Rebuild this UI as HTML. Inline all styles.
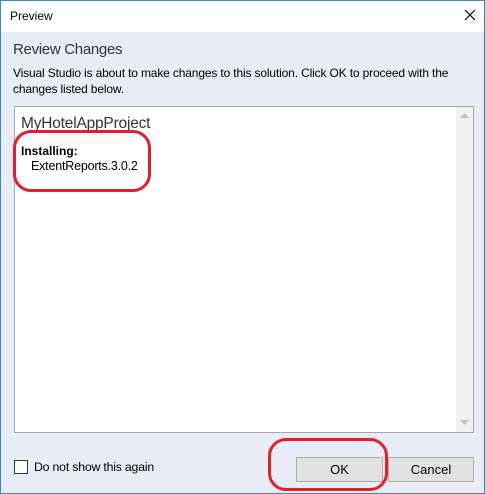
<!DOCTYPE html>
<html><head><style>
body{margin:0;width:485px;height:494px;overflow:hidden;font-family:"Liberation Sans",sans-serif;}
.win{position:absolute;left:0;top:0;width:483px;height:492px;border:1px solid #3c8ac8;background:#e9ecf5;}
.title{position:absolute;left:0;top:0;width:483px;height:31px;background:#fff;}
.t{position:absolute;color:#000;white-space:nowrap;}
.list{position:absolute;left:13px;top:105px;width:458px;height:325px;background:#fff;border:1px solid #a8a8a8;}
.sb{position:absolute;right:0;top:0;width:17px;height:100%;background:#f0f0f0;}
.btn{position:absolute;top:456px;height:23px;background:#e1e1e1;border:1px solid #adadad;font-size:13px;text-align:center;line-height:23px;}
.red{position:absolute;border:3px solid #e0202a;border-radius:18px;}
</style></head><body>
<div class="win">
<div class="title"></div>
<div class="t" style="left:9px;top:8px;font-size:12px">Preview</div>
<svg style="position:absolute;left:463px;top:8px" width="12" height="12"><path d="M1 1L11 11M11 1L1 11" stroke="#000" stroke-width="1.2"/></svg>
<div class="t" style="left:12px;top:40px;font-size:15px;color:#333;letter-spacing:-0.3px">Review Changes</div>
<div class="t" style="left:12px;top:64px;font-size:12px;line-height:16px;letter-spacing:-0.15px">Visual Studio is about to make changes to this solution. Click OK to proceed with the<br>changes listed below.</div>
<div class="list">
<div class="sb">
<svg style="position:absolute;left:4px;top:6px" width="9" height="6"><path d="M0 5L4.5 0L9 5Z" fill="#c2c2c2"/></svg>
<svg style="position:absolute;left:4px;bottom:6px" width="9" height="6"><path d="M0 0L4.5 5L9 0Z" fill="#c2c2c2"/></svg>
</div>
<div class="t" style="left:6px;top:8px;font-size:15.5px;color:#333;letter-spacing:-0.2px">MyHotelAppProject</div>
<div class="t" style="left:6px;top:37px;font-size:12px;font-weight:bold">Installing:</div>
<div class="t" style="left:16px;top:52px;font-size:12.5px;letter-spacing:-0.2px">ExtentReports.3.0.2</div>
</div>
<div style="position:absolute;left:13px;top:459px;width:12px;height:12px;border:1px solid #333;background:#fff"></div>
<div class="t" style="left:33px;top:459px;font-size:12.3px;letter-spacing:-0.2px">Do not show this again</div>
<div class="btn" style="left:295px;width:85px">OK</div>
<div class="btn" style="left:387px;width:84px">Cancel</div>
</div>
<div class="red" style="left:13px;top:130px;width:132px;height:56px"></div>
<div class="red" style="left:268px;top:438px;width:114px;height:47px"></div>
</body></html>
